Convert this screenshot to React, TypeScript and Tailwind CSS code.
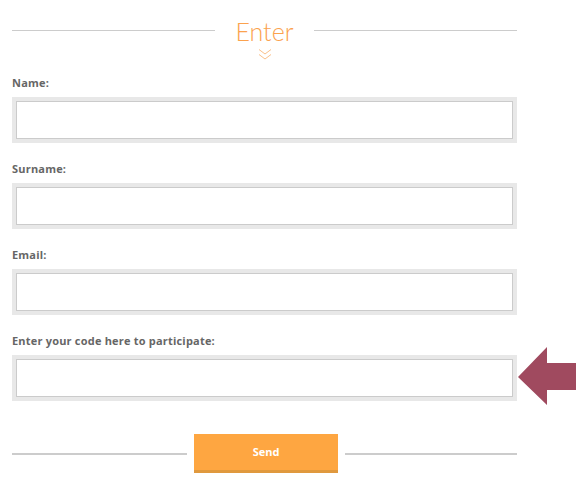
import React from "react";

const Field = ({ label, first }: { label: string; first?: boolean }) => (
  <div className={first ? "mt-[15px]" : "mt-[19px]"}>
    <div className="text-[11px] leading-[14px] font-bold text-[#666666] tracking-[0.2px]">
      {label}
    </div>
    <div className="mt-[7px] h-[46px] bg-[#e8e8e8] p-[4px]">
      <div className="h-full border border-[#cbcbcb] bg-white" />
    </div>
  </div>
);

export default function App() {
  return (
    <div
      className="relative w-[585px] h-[482px] bg-white overflow-hidden"
      style={{ fontFamily: "'Open Sans', 'Liberation Sans', sans-serif" }}
    >
      <div className="ml-3 w-[505px]">
        <div className="mt-[17px] flex items-center">
          <div className="flex-1 h-px bg-[#cccccc] translate-y-[-1px]" />
          <div
            className="px-5 text-[25px] leading-[28px] font-light text-[#fba24e]"
            style={{ fontFamily: "Lato, 'Open Sans', sans-serif" }}
          >
            Enter
          </div>
          <div className="flex-1 h-px bg-[#cccccc] translate-y-[-1px]" />
        </div>
        <div className="mt-[3px] flex justify-center">
          <svg width="16" height="13" viewBox="0 0 16 13" fill="none">
            <path d="M2 1.5 L8 6 L14 1.5" stroke="#fbc08a" strokeWidth="1" />
            <path d="M2 6.5 L8 11 L14 6.5" stroke="#fbc08a" strokeWidth="1" />
          </svg>
        </div>
        <Field label="Name:" first />
        <Field label="Surname:" />
        <Field label="Email:" />
        <Field label="Enter your code here to participate:" />
        <div className="mt-[33px] flex items-center">
          <div className="flex-1 h-[2px] bg-[#cccccc]" />
          <button className="mx-[7px] w-[144px] h-[39px] bg-[#fea641] border-b-[3px] border-[#e0993e] text-white text-[11px] font-bold">
            Send
          </button>
          <div className="w-[172px] h-[2px] bg-[#cccccc]" />
        </div>
      </div>
      <svg
        className="absolute left-[518px] top-[347px]"
        width="58"
        height="58"
        viewBox="0 0 58 58"
      >
        <polygon points="0,30 29,0 29,16 58,16 58,43 29,43 29,58" fill="#a04a5f" />
      </svg>
    </div>
  );
}
